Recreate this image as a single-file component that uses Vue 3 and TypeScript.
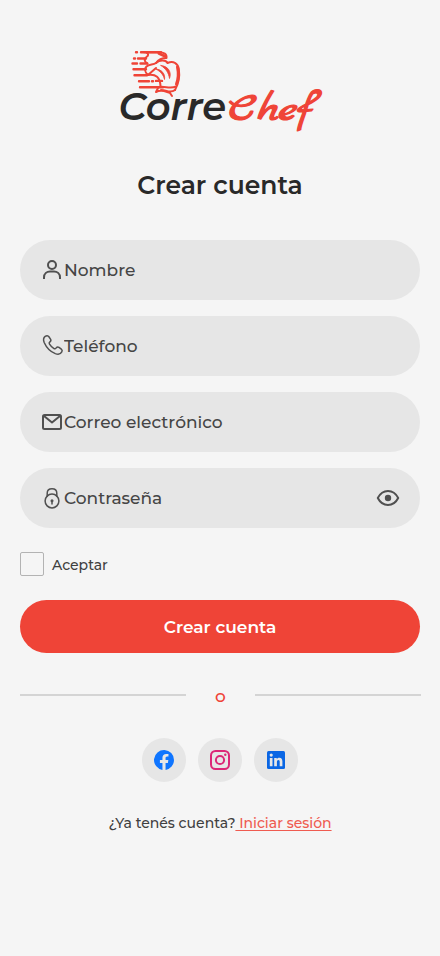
<script setup lang="ts">
import { ref } from 'vue'

type FieldKey = 'name' | 'phone' | 'mail' | 'lock'

interface Field {
  key: FieldKey
  label: string
  type: string
}

const fields: Field[] = [
  { key: 'name', label: 'Nombre', type: 'text' },
  { key: 'phone', label: 'Teléfono', type: 'tel' },
  { key: 'mail', label: 'Correo electrónico', type: 'email' },
  { key: 'lock', label: 'Contraseña', type: 'password' },
]

const values = ref<Record<FieldKey, string>>({ name: '', phone: '', mail: '', lock: '' })
const accepted = ref(false)
const showPassword = ref(false)

function inputType(field: Field): string {
  return field.key === 'lock' && showPassword.value ? 'text' : field.type
}
</script>

<template>
  <main class="screen">
    <svg class="logo" viewBox="0 0 210 90" width="210" height="90" role="img">
      <g class="hat-lines">
        <path d="M21 8.300H22M26 8.300H46M19 14.500H20M23 14.500H31M17.500 19.500H22M25.500 19.500H32M18.500 25.300H31M19.500 31.300H32M24 37.200H34M37 37.200H38M41 36.900H47M25 43.300H48" />
      </g>
      <g class="hat-shape">
        <path d="M29 8.300H44C49 8.300 52 10 51.500 14C47 14 43.500 15.500 41 19C38 21 34 20 31.500 22.500M31 8.500C33.500 9 34 11.500 31.500 13C28 16 30.500 18.500 32.500 19.500M31.500 22.500C28 26 31 29 33 31L41 24" />
        <path d="M41 19C45 15.500 51 16 52.500 19C58 16.500 63 19 63.800 25C65 33 63.500 40 60 46M33 31C41 30 45 33 45.500 42" />
        <path d="M44 43C50 42 55 45 61 42.500M43.500 43L41 48C47 45 51 48 55 49L57 52M46 46C52 46 55 50 60 46" />
        <path class="thick" d="M44 9.500L50.500 12.500M62.500 23C64 30 63 36 61.500 40" />
        <path class="fold" d="M41 25C47 25.500 50.500 30 49.500 35.500C48.500 31 46 28 41 25ZM46 21.500C53 22 57 28 54.500 34.500C53.500 28.500 51 25 46 21.500Z" />
      </g>
      <text class="logo-corre" x="3.500" y="76" textLength="107.500" lengthAdjust="spacingAndGlyphs">Corre</text>
      <text class="logo-chef" x="113" y="76" textLength="86" lengthAdjust="spacingAndGlyphs">Chef</text>
    </svg>

    <h1 class="title">Crear cuenta</h1>

    <form class="form" @submit.prevent>
      <label v-for="field in fields" :key="field.key" class="field">
        <svg class="field-icon" viewBox="0 0 24 24" width="24" height="24">
          <g v-if="field.key === 'name'" class="line bold">
            <circle cx="12" cy="7" r="4" />
            <path d="M4 21V19.500C4 15.500 7 13.500 10 13.500H14C17 13.500 20 15.500 20 19.500V21" />
          </g>
          <path v-else-if="field.key === 'phone'" class="line" d="M5.200 2.400C3.200 3.800 3.200 6.100 4.300 8.700C6.600 13.800 10.500 17.700 15.300 19.600C18.300 20.700 20.600 20.100 21.800 17.900C22.500 16.700 22.200 15.800 21.300 15.100L19 13.400C17.900 12.700 16.900 13 16.200 13.900C15.500 15 14.700 15.100 13.700 14.400C12 13.300 10.500 11.800 9.500 10.200C8.800 9.100 9 8.500 9.900 7.800C10.900 7.100 11.200 6.200 10.500 5.100L8.900 2.800C8 1.500 6.500 1.500 5.200 2.400Z" />
          <g v-else-if="field.key === 'mail'" class="line bold">
            <rect x="3" y="5" width="18" height="14" rx="1.500" />
            <path d="M3.700 5.700L12 12.500L20.300 5.700" />
          </g>
          <g v-else class="line">
            <circle cx="12" cy="15" r="6.900" />
            <path d="M7.200 10.300V7.200C7.200 4.200 9.200 2.700 12 2.700S16.800 4.200 16.800 7.200V10.300M12 15V18" />
            <circle class="dot" cx="12" cy="14.700" r="1.500" />
          </g>
        </svg>
        <input
          v-model="values[field.key]"
          class="field-input"
          :type="inputType(field)"
          :placeholder="field.label"
        />
        <button v-if="field.key === 'lock'" class="eye" type="button" @click="showPassword = !showPassword">
          <svg viewBox="0 0 24 24" width="24" height="24">
            <path class="line bold" d="M1.800 12C4.200 7.300 7.700 5 12 5S19.800 7.300 22.200 12C19.800 16.700 16.300 19 12 19S4.200 16.700 1.800 12Z" />
            <circle class="dot" cx="12" cy="12" r="3.200" />
          </svg>
        </button>
      </label>

      <label class="accept">
        <input v-model="accepted" class="checkbox" type="checkbox" />
        <span>Aceptar</span>
      </label>

      <button class="submit" type="submit">Crear cuenta</button>
    </form>

    <div class="divider">
      <i class="rule"></i>
      <span>o</span>
      <i class="rule"></i>
    </div>

    <nav class="social">
      <button class="social-button" type="button">
        <svg viewBox="0 0 24 24" width="24" height="24">
          <path fill="#0f75ff" d="M22 12A10 10 0 1 0 10.440 21.880V14.890H7.900V12H10.440V9.800C10.440 7.290 11.930 5.910 14.220 5.910C15.310 5.910 16.450 6.100 16.450 6.100V8.560H15.190C13.950 8.560 13.560 9.330 13.560 10.120V12H16.330L15.890 14.890H13.560V21.880A10 10 0 0 0 22 12Z" />
        </svg>
      </button>
      <button class="social-button" type="button">
        <svg class="instagram" viewBox="0 0 24 24" width="24" height="24">
          <rect x="3" y="3" width="18" height="18" rx="4.500" />
          <circle cx="12" cy="12" r="4.100" />
          <circle class="lens-dot" cx="17.300" cy="6.700" r="1.200" />
        </svg>
      </button>
      <button class="social-button" type="button">
        <svg viewBox="0 0 24 24" width="24" height="24">
          <rect x="3" y="3" width="18" height="18" rx="1.500" fill="#0a66e4" />
          <g fill="#e6e6e6">
            <circle cx="7.200" cy="7.100" r="1.600" />
            <path d="M5.800 10H8.500V18.300H5.800ZM10.200 10H12.800V11.200C13.400 10.300 14.300 9.800 15.400 9.800C17.500 9.800 18.400 11.300 18.400 13.500V18.300H15.700V14C15.700 12.800 15.300 12.100 14.400 12.100C13.400 12.100 12.900 12.900 12.900 14V18.300H10.200Z" />
          </g>
        </svg>
      </button>
    </nav>

    <p class="signin">
      <span>¿Ya tenés cuenta?</span>
      <a class="link" href="#">&nbsp;Iniciar sesión</a>
    </p>
  </main>
</template>

<style>
body {
  margin: 0;
  background: #f5f5f5;
}
</style>

<style scoped>
.screen {
  box-sizing: border-box;
  width: 440px;
  height: 956px;
  padding: 44px 20px 0;
  display: flex;
  flex-direction: column;
  background: #f5f5f5;
  color: #292929;
  font-family: Montserrat, Inter, sans-serif;
  overflow: hidden;
}

button {
  padding: 0;
  border: 0;
  font-family: inherit;
  cursor: pointer;
}

svg {
  display: block;
}

.logo {
  align-self: center;
  flex: none;
  overflow: visible;
}

.hat-lines,
.hat-shape {
  fill: none;
  stroke: #ef4437;
  stroke-width: 2;
  stroke-linecap: round;
  stroke-linejoin: round;
}

.hat-lines {
  stroke-width: 2.4;
}

.thick {
  stroke-width: 3;
}

.fold {
  fill: #ef4437;
  stroke-width: 0.8;
}

.logo-corre {
  fill: #292929;
  font: italic 600 39px Montserrat, Inter, sans-serif;
}

.logo-chef {
  fill: #ef4437;
  stroke: #ef4437;
  stroke-width: 1.2;
  stroke-linejoin: round;
  font: 400 39px 'Marck Script', Caveat, cursive;
}

.title {
  margin: 35px 0 0;
  height: 32px;
  text-align: center;
  font-size: 25px;
  font-weight: 600;
  line-height: 32px;
}

.form {
  margin-top: 39px;
  display: flex;
  flex-direction: column;
  gap: 16px;
}

.field {
  box-sizing: border-box;
  height: 60px;
  padding: 0 20px;
  display: flex;
  align-items: center;
  border-radius: 30px;
  background: #e6e6e6;
}

.field-icon {
  flex: none;
}

.line {
  fill: none;
  stroke: #505050;
  stroke-width: 1.5;
  stroke-linecap: round;
  stroke-linejoin: round;
}

.line.bold {
  stroke-width: 2;
  stroke-linecap: butt;
}

.dot {
  fill: #505050;
  stroke: none;
}

.field-input {
  width: 240px;
  height: 24px;
  padding: 0;
  border: 0;
  outline: 0;
  background: transparent;
  color: #454545;
  font: 500 17px/24px Montserrat, Inter, sans-serif;
}

.field-input::placeholder {
  color: #454545;
  opacity: 1;
}

.eye {
  margin-left: auto;
  background: transparent;
}

.accept {
  margin-top: 8px;
  display: flex;
  align-items: center;
  gap: 8px;
  height: 24px;
  font-size: 14px;
  font-weight: 500;
  line-height: 18px;
  color: #404040;
}

.accept span {
  padding-top: 1px;
}

.checkbox {
  appearance: none;
  box-sizing: border-box;
  width: 24px;
  height: 24px;
  margin: 0;
  border: 1px solid #b3b3b3;
  border-radius: 2px;
}

.submit {
  margin-top: 8px;
  height: 53px;
  border-radius: 27px;
  background: #ef4437;
  color: #fff;
  font-size: 17px;
  font-weight: 600;
}

.divider {
  width: 401px;
  margin-top: 32px;
  height: 20px;
  display: flex;
  justify-content: space-between;
  color: #ef4437;
  font-size: 17px;
  font-weight: 500;
  line-height: 23px;
}

.rule {
  width: 166px;
  height: 2px;
  margin-top: 9px;
  background: #d4d4d4;
}

.social {
  margin-top: 33px;
  display: flex;
  justify-content: center;
  gap: 12px;
}

.social-button {
  width: 44px;
  height: 44px;
  display: grid;
  place-items: center;
  border-radius: 50%;
  background: #e6e6e6;
}

.instagram {
  fill: none;
  stroke: #dc2777;
  stroke-width: 2;
}

.instagram .lens-dot {
  fill: #dc2777;
  stroke: none;
}

.signin {
  margin: 31px 0 0;
  display: flex;
  justify-content: center;
  font-size: 14px;
  line-height: 20px;
  font-weight: 500;
  color: #404040;
  white-space: nowrap;
}

.link {
  color: #ef5b50;
  text-decoration: underline;
  text-decoration-thickness: 1px;
  text-underline-offset: 1.5px;
}
</style>
